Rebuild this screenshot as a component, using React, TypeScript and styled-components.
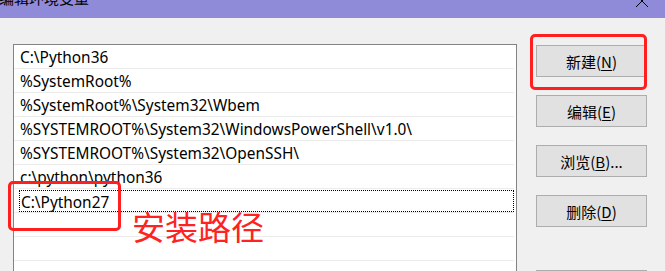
import React from "react";
import styled, { createGlobalStyle } from "styled-components";

const Global = createGlobalStyle`
  html, body { margin: 0; padding: 0; background: #f0f0f0; overflow: hidden; }
  body { font-family: "Noto Sans", "Noto Sans CJK SC", sans-serif; }
`;

const Win = styled.div`
  width: 666px;
  height: 271px;
  overflow: hidden;
  background: #f0f0f0;
  box-sizing: border-box;
  border-right: 1px solid #d8d8d8;
`;

const TitleBar = styled.div`
  height: 18px;
  background: #8f8bd8;
  display: flex;
  justify-content: space-between;
  align-items: flex-start;
  overflow: hidden;
  padding-right: 16px;
`;

const Title = styled.div`
  font-family: "Noto Sans CJK SC", sans-serif;
  font-size: 15px;
  line-height: 15px;
  margin-top: -10px;
  margin-left: -1px;
  color: #000;
`;

const CloseIcon = styled.svg`
  margin-top: -6px;
  flex: none;
`;

const Body = styled.div`
  display: flex;
  align-items: flex-start;
  padding: 26px 0 0 13px;
  gap: 19px;
`;

const ListWrap = styled.div`
  position: relative;
`;

const ListBox = styled.div`
  width: 504px;
  height: 240px;
  box-sizing: border-box;
  border: 1px solid #838383;
  background: #fff;
  padding-right: 2px;
`;

const Row = styled.div<{ $focus?: boolean }>`
  height: 24px;
  box-sizing: border-box;
  border-bottom: 1px solid #ececec;
  padding-left: ${(p) => (p.$focus ? "5px" : "0")};
  padding-top: ${(p) => (p.$focus ? "1px" : "0")};
`;

const RowText = styled.div<{ $focus?: boolean }>`
  height: ${(p) => (p.$focus ? "22px" : "23px")};
  box-sizing: border-box;
  border: ${(p) => (p.$focus ? "1px dotted #000" : "none")};
  padding-left: ${(p) => (p.$focus ? "1px" : "6px")};
  font-size: 15.4px;
  line-height: 23px;
  padding-top: ${(p) => (p.$focus ? "0" : "1px")};
  color: #000;
  white-space: nowrap;
  font-family: "Noto Sans", "Noto Sans CJK SC", sans-serif;
`;

const Buttons = styled.div`
  display: flex;
  flex-direction: column;
  margin-top: 1px;
`;

const Button = styled.div<{ $gap?: number }>`
  position: relative;
  width: 111px;
  height: 32px;
  flex: none;
  box-sizing: border-box;
  background: #e1e1e1;
  border: 1px solid #adadad;
  margin-bottom: ${(p) => p.$gap ?? 18}px;
  display: flex;
  align-items: center;
  justify-content: center;
  font-family: "Noto Sans CJK SC", sans-serif;
  font-size: 15px;
  color: #000;
`;

const Key = styled.span`
  text-decoration: underline;
  text-underline-offset: 2px;
`;

const RedBox = styled.div<{ $l: number; $t: number; $w: number; $h: number }>`
  position: absolute;
  left: ${(p) => p.$l}px;
  top: ${(p) => p.$t}px;
  width: ${(p) => p.$w}px;
  height: ${(p) => p.$h}px;
  box-sizing: border-box;
  border: 3px solid #ff1f1f;
  border-radius: 5px;
  pointer-events: none;
`;

const Note = styled.div`
  position: absolute;
  left: 119px;
  top: 162px;
  font-family: "Noto Sans CJK SC", sans-serif;
  font-size: 33px;
  line-height: 40px;
  color: #ff2222;
  white-space: nowrap;
`;

const paths = [
  "C:\\Python36",
  "%SystemRoot%",
  "%SystemRoot%\\System32\\Wbem",
  "%SYSTEMROOT%\\System32\\WindowsPowerShell\\v1.0\\",
  "%SYSTEMROOT%\\System32\\OpenSSH\\",
  "c:\\python\\python36",
  "C:\\Python27",
  "",
  "",
  "",
];

export default function App() {
  return (
    <Win>
      <Global />
      <TitleBar>
        <Title>编辑环境变量</Title>
        <CloseIcon width="14" height="14" viewBox="0 0 14 14">
          <path d="M1 1 L13 13 M13 1 L1 13" stroke="#000" strokeWidth="1" fill="none" />
        </CloseIcon>
      </TitleBar>
      <Body>
        <ListWrap>
          <ListBox>
            {paths.map((p, i) => (
              <Row key={i} $focus={i === 6}>
                <RowText $focus={i === 6}>{p}</RowText>
              </Row>
            ))}
          </ListBox>
          <RedBox $l={-5} $t={137} $w={113} $h={50} />
          <Note>安装路径</Note>
        </ListWrap>
        <Buttons>
          <Button>
            新建(<Key>N</Key>)
            <RedBox $l={-7} $t={-12} $w={117} $h={56} />
          </Button>
          <Button>
            编辑(<Key>E</Key>)
          </Button>
          <Button>
            浏览(<Key>B</Key>)...
          </Button>
          <Button $gap={43}>
            删除(<Key>D</Key>)
          </Button>
          <Button />
        </Buttons>
      </Body>
    </Win>
  );
}
